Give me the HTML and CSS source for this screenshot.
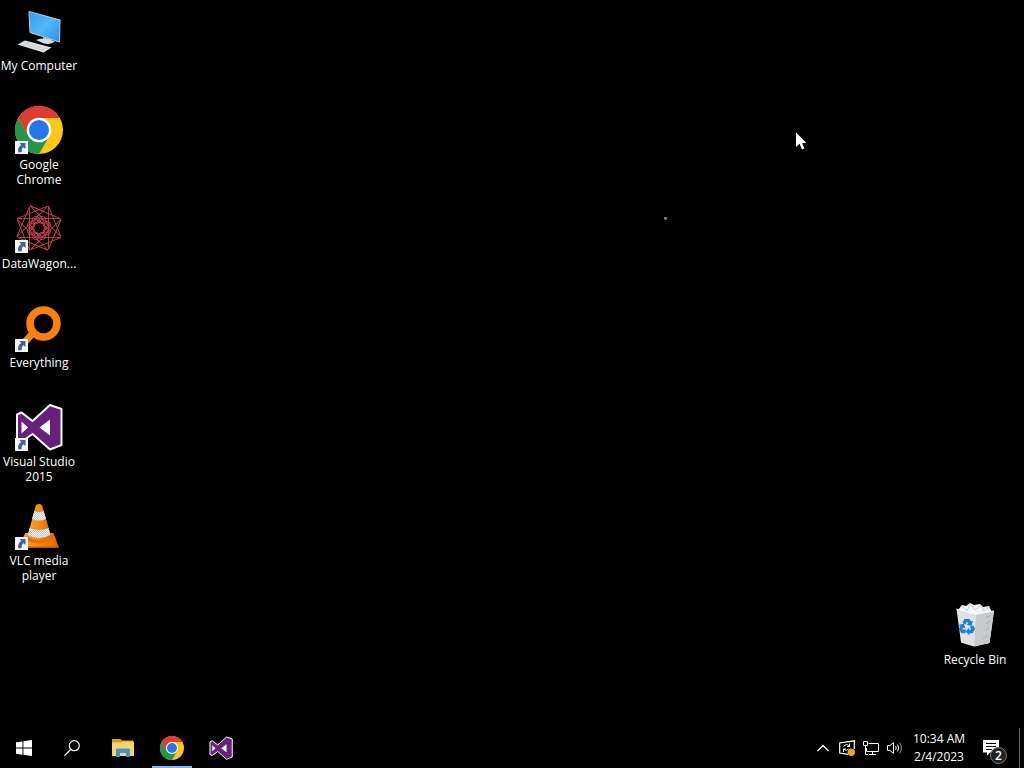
FILE: index.html
```
<!DOCTYPE html>
<html lang="en">
<head>
    <meta charset="UTF-8">
    <meta name="viewport" content="width=device-width, initial-scale=1.0">
    <title>Desktop</title>
    <link rel="stylesheet" href="styles.css">
</head>
<body>

<!-- shared icons -->
<svg class="defs" aria-hidden="true">
    <symbol id="shortcut" viewBox="0 0 13 13">
        <rect width="13" height="13" fill="#f4f6f8"/>
        <path d="M4.500 2H10.500V8L8.500 6.200Q6.300 7.500 6.800 11L3.500 11.500Q1.800 7 6.300 4Z" fill="#3a639f"/>
    </symbol>
    <symbol id="chrome" viewBox="0 0 48 48">
        <circle cx="24" cy="24" r="24" fill="#fcc814"/>
        <path d="M3.200 12A24 24 0 0 0 24 48L34.400 30L24 24L13.600 30Z" fill="#23964a"/>
        <path d="M3.200 12A24 24 0 0 1 44.800 12H24V24L13.600 30Z" fill="#df3b30"/>
        <circle cx="24" cy="24" r="12.300" fill="#fff"/>
        <circle cx="24" cy="24" r="10" fill="#2577e8"/>
    </symbol>
    <symbol id="vs" viewBox="0 0 48 48">
        <path d="M35 2L46.500 6V42L35 46.500L17.500 31L6.500 39L2 37V11.500L6.500 9.500L17.500 18Z" fill="#68217a" stroke="#fff" stroke-width="2" stroke-linejoin="round"/>
        <path d="M35 16.500V32.500L24.500 24.500ZM6.500 18.500V30.500L13 24.500Z" fill="#fff"/>
    </symbol>
</svg>

<main class="desktop">
    <div class="icons">
        <button class="icon">
            <svg viewBox="0 0 48 48">
                <defs>
                    <linearGradient id="screen" x1="0" y1="0" x2="1" y2="1">
                        <stop offset="0" stop-color="#2c9df0"/>
                        <stop offset=".5" stop-color="#52b8fa"/>
                        <stop offset="1" stop-color="#2691e8"/>
                    </linearGradient>
                </defs>
                <path d="M28 30L36 32V35H28Z" fill="#aab4ba"/>
                <path d="M21 33Q30 29.500 40 34.500Q36 38 29 36.500Z" fill="#d5dade"/>
                <path d="M14 4.500L45 13L44.500 35L15 25.500Z" fill="url(#screen)" stroke="#a9d6ee"/>
                <path d="M10 33.500L36.500 40.500L28.500 45.500L2.500 37.500Z" fill="#e6e9ec"/>
                <path d="M7.500 35L33.500 42.500M5 36.300L31 44M15 34.800L7.500 39M21 36.400L13.500 40.800M27 38L19.500 42.600M32 39.500L25 44.300" stroke="#b4b9bd" stroke-width=".5"/>
            </svg>
            <span class="label">My Computer</span>
        </button>
        <button class="icon">
            <svg viewBox="0 0 48 48">
                <use href="#chrome"/>
                <use href="#shortcut" y="35" width="13" height="13"/>
            </svg>
            <span class="label">Google Chrome</span>
        </button>
        <button class="icon">
            <svg viewBox="0 0 48 48">
                <defs>
                    <g id="petal">
                        <path d="M24 0L41 40M24 0L47 23"/>
                        <circle cx="24" cy="15.500" r="3.500"/>
                        <circle cx="24" cy="16.500" r="1.500"/>
                    </g>
                </defs>
                <g fill="none" stroke="#d04556" stroke-width=".9" transform="translate(0 -1) rotate(23 24 24)">
                    <use href="#petal"/>
                    <use href="#petal" transform="rotate(45 24 24)"/>
                    <use href="#petal" transform="rotate(90 24 24)"/>
                    <use href="#petal" transform="rotate(135 24 24)"/>
                    <use href="#petal" transform="rotate(180 24 24)"/>
                    <use href="#petal" transform="rotate(225 24 24)"/>
                    <use href="#petal" transform="rotate(270 24 24)"/>
                    <use href="#petal" transform="rotate(315 24 24)"/>
                </g>
                <circle cx="24" cy="23" r="3.500" fill="#14070a"/>
                <use href="#shortcut" y="35" width="13" height="13"/>
            </svg>
            <span class="label">DataWagon...</span>
        </button>
        <button class="icon">
            <svg viewBox="0 0 48 48">
                <path d="M18 29L8 40" stroke="#ff8008" stroke-width="7"/>
                <circle cx="28.500" cy="19.500" r="13.500" fill="none" stroke="#ff8008" stroke-width="7.500"/>
                <use href="#shortcut" y="35" width="13" height="13"/>
            </svg>
            <span class="label">Everything</span>
        </button>
        <button class="icon">
            <svg viewBox="0 0 48 48">
                <use href="#vs"/>
                <use href="#shortcut" y="35" width="13" height="13"/>
            </svg>
            <span class="label">Visual Studio 2015</span>
        </button>
        <button class="icon">
            <svg viewBox="0 0 48 48">
                <defs>
                    <linearGradient id="cone">
                        <stop offset="0" stop-color="#ffa026"/>
                        <stop offset=".5" stop-color="#fb8a10"/>
                        <stop offset="1" stop-color="#d96500"/>
                    </linearGradient>
                    <pattern id="mesh" width="2" height="2" patternUnits="userSpaceOnUse">
                        <rect width="2" height="2" fill="#f0f1f3"/>
                        <path d="M0 0H1V1H0ZM1 1H2V2H1Z" fill="#c4c8cf"/>
                    </pattern>
                </defs>
                <path d="M10 31H38.500L43.500 44.500Q43.500 46 42 46H6Q4.500 46 5 44.500Z" fill="url(#cone)"/>
                <path d="M12.500 34L11.500 38Q24 45 37 38L36 34Z" fill="#e57200"/>
                <path d="M5 44.500H43.500V46H5Z" fill="#c65a00"/>
                <path d="M21 3Q24 1 27 3L36 34Q24 42 12.500 34Z" fill="url(#cone)"/>
                <path d="M19.300 9Q24 11 28.700 9L31 17Q24 20 17 17Z" fill="url(#mesh)"/>
                <path d="M14.700 26Q24 30 33.500 26L35.500 33Q24 39 12.800 33Z" fill="url(#mesh)"/>
                <use href="#shortcut" y="35" width="13" height="13"/>
            </svg>
            <span class="label">VLC media player</span>
        </button>
    </div>

    <button class="icon">
        <svg viewBox="0 0 48 48">
            <path d="M7 9L11 4L15 5L19 2L23 4L29 3L32 6L38 5L41 11L35 16H12Z" fill="#f3f4f5"/>
            <path d="M11 5L16 10L19 3L24 9L30 4L33 10L38 6" fill="none" stroke="#c3c7ca" stroke-width=".8"/>
            <path d="M5.500 8L25 14L43 10L38.500 42L23 45.500L10 41.500Z" fill="#dfe2e4"/>
            <path d="M25 14L43 10L38.500 42L23 45.500Z" fill="#c7cbce"/>
            <path d="M35 17L40 14M35 23L39 20M34 30L38 26M32 38L37 34" stroke="#9fa5a9" stroke-width=".8"/>
            <path d="M5.500 8L25 13L43 10" fill="none" stroke="#f8f9fa"/>
            <g fill="#1c80d4">
                <path id="recycle" d="M11.500 21.500L13.500 18H18.500L20 20.500L22 19.800L20.500 25L15.500 23.800L17.300 22.500L16 20.800L14.300 23.800Z"/>
                <use href="#recycle" transform="rotate(120 16 26)"/>
                <use href="#recycle" transform="rotate(240 16 26)"/>
            </g>
        </svg>
        <span class="label">Recycle Bin</span>
    </button>

    <span class="speck"></span>
    <svg class="cursor" viewBox="0 0 12 19">
        <path d="M0 .500V15L3.500 11.800L6 17.500L8.500 16.500L6 11H10.500Z" fill="#fff"/>
    </svg>
</main>

<footer class="taskbar">
    <nav class="pinned">
        <button class="start" aria-label="Start">
            <svg width="16" height="16" viewBox="0 0 16 16">
                <path d="M0 2.300L6.500 1.400V7.600H0ZM7.400 1.300L16 0V7.600H7.400ZM0 8.500H6.500V14.700L0 13.800ZM7.400 8.500H16V16L7.400 14.800Z" fill="#fff"/>
            </svg>
        </button>
        <button class="start" aria-label="Search">
            <svg width="16" height="16" viewBox="0 0 16 16">
                <circle cx="10.300" cy="5.700" r="5" fill="none" stroke="#fff" stroke-width="1.200"/>
                <path d="M6.800 9.300L.500 15.600" stroke="#fff" stroke-width="1.300"/>
            </svg>
        </button>
        <div class="apps">
            <button class="app" aria-label="File Explorer">
                <svg width="22" height="18" viewBox="0 0 22 18">
                    <path d="M0 0H8.500L10 1.500H21V5H0Z" fill="#d79b22"/>
                    <path d="M0 3.500H9L10.500 2.500H22V17H0Z" fill="#fbd468"/>
                    <path d="M4 18V10.500Q4 9.500 5 9.500H17Q18 9.500 18 10.500V18H14V14H8V18Z" fill="#3d96d2"/>
                </svg>
            </button>
            <button class="app active" aria-label="Google Chrome">
                <svg width="24" height="24"><use href="#chrome"/></svg>
            </button>
            <button class="app" aria-label="Visual Studio">
                <svg width="24" height="24"><use href="#vs"/></svg>
            </button>
        </div>
    </nav>

    <div class="tray">
        <button class="tray-icon" aria-label="Show hidden icons">
            <svg width="16" height="16" viewBox="0 0 16 16">
                <path d="M2.500 11L8 5.500L13.500 11" fill="none" stroke="#fff" stroke-width="1.300"/>
            </svg>
        </button>
        <button class="tray-icon" aria-label="Updates">
            <svg width="16" height="16" viewBox="0 0 16 16">
                <path d="M9 14.300L.700 13V3L15.300 .800V9" fill="none" stroke="#fff" stroke-width="1.200"/>
                <path d="M4.500 6.500Q7.500 3 10.300 6M10.500 3.500V6.500H8M9.500 9Q7.500 11.500 5 9.500M4.500 12V9H7" fill="none" stroke="#fff"/>
                <circle cx="12.300" cy="12.300" r="3.700" fill="#f6a01e"/>
            </svg>
        </button>
        <button class="tray-icon" aria-label="Network">
            <svg width="16" height="16" viewBox="0 0 16 16">
                <path d="M5.500 3.500H15.500V11.500H3.500V8M9.500 11.500V14.500M6 14.500H13" fill="none" stroke="#fff"/>
                <path d="M.500 1.500H4.500V5.500H.500ZM2.500 5.500V14.500H5" fill="none" stroke="#fff"/>
            </svg>
        </button>
        <button class="tray-icon" aria-label="Volume">
            <svg width="16" height="16" viewBox="0 0 16 16">
                <path d="M.500 5.500H3L6.500 2.500V13.500L3 10.500H.500Z" fill="none" stroke="#fff"/>
                <path d="M8.500 6Q10 8 8.500 10M10.500 4.500Q13 8 10.500 11.500" fill="none" stroke="#fff"/>
                <path d="M12.500 2.500Q16.500 8 12.500 13.500" fill="none" stroke="#999"/>
            </svg>
        </button>
        <button class="clock">10:34 AM<br>2/4/2023</button>
        <button class="notifications" aria-label="Notifications">
            <svg width="16" height="16" viewBox="0 0 16 16">
                <path d="M0 0H16V12.500H7L4 15.500V12.500H0Z" fill="#fff"/>
                <path d="M3 3.500H13M3 6.500H13M3 9.500H9" stroke="#000"/>
            </svg>
            <span class="badge">2</span>
        </button>
        <button class="show-desktop" aria-label="Show desktop"></button>
    </div>
</footer>

</body>
</html>
```
FILE: styles.css
```
body {
    margin: 0;
    min-height: 100vh;
    display: flex;
    flex-direction: column;
    background: #000;
    color: #fff;
    font-family: "Open Sans", "Noto Sans", sans-serif;
    font-size: 12px;
    overflow: hidden;
}

button {
    margin: 0;
    padding: 0;
    border: none;
    background: none;
    color: inherit;
    font: inherit;
}

.defs {
    display: none;
}

/* desktop */
.desktop {
    position: relative;
    flex: 1;
    display: flex;
    justify-content: space-between;
    align-items: flex-end;
    padding: 0 10px 35px 0;
}

.icons {
    align-self: flex-start;
    display: flex;
    flex-direction: column;
}

.icon {
    width: 78px;
    height: 99px;
    padding-top: 7px;
    display: flex;
    flex-direction: column;
    align-items: center;
    gap: 3px;
}

.icon svg {
    width: 48px;
    height: 48px;
    flex: none;
}

.label {
    line-height: 15px;
    text-align: center;
    text-shadow: 0 1px 2px #000;
}

.speck {
    position: absolute;
    left: 664px;
    top: 217px;
    width: 3px;
    height: 3px;
    background: #777;
    border-radius: 0 0 2px 2px;
}

.cursor {
    position: absolute;
    left: 796px;
    top: 132px;
    width: 12px;
    height: 19px;
}

/* taskbar */
.taskbar {
    height: 40px;
    display: flex;
    justify-content: space-between;
}

.pinned,
.apps,
.tray {
    display: flex;
}

.apps {
    padding-left: 2px;
}

.start,
.app,
.tray-icon,
.notifications {
    display: flex;
    align-items: center;
    justify-content: center;
}

.start,
.notifications {
    width: 48px;
}

.app {
    position: relative;
    width: 49px;
}

.app.active::after {
    content: "";
    position: absolute;
    left: 5px;
    right: 4px;
    bottom: 0;
    height: 2px;
    background: #76b9ed;
}

.tray-icon {
    width: 24px;
}

.clock {
    width: 64px;
    line-height: 18px;
    text-align: center;
}

.notifications {
    position: relative;
    padding-right: 8px;
    box-sizing: border-box;
}

.badge {
    position: absolute;
    right: 12px;
    bottom: 4px;
    width: 15px;
    height: 15px;
    border: 1px solid #777;
    border-radius: 50%;
    background: #222;
    font-size: 12px;
    font-weight: 600;
    line-height: 15px;
}

.show-desktop {
    width: 5px;
    border-left: 1px solid #666;
}
```
